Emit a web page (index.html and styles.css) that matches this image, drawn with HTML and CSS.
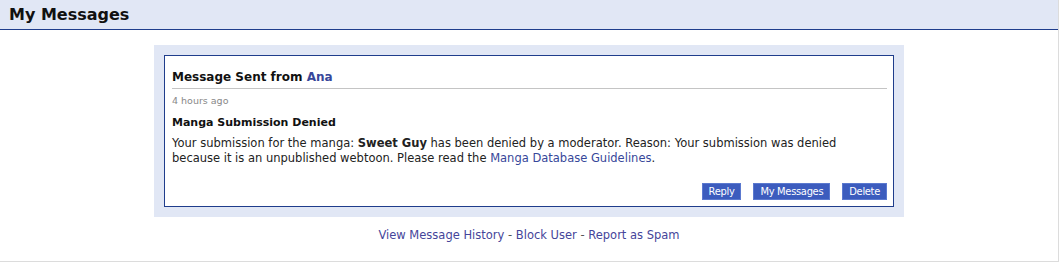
FILE: index.html
```html
<!DOCTYPE html>
<html lang="en">
<head>
    <meta charset="UTF-8">
    <title>My Messages</title>
    <link rel="stylesheet" href="styles.css">
</head>
<body>
    <div class="page">
        <!-- Page header -->
        <div class="header">
            <h1>My Messages</h1>
        </div>

        <div class="content">
            <div class="msg-wrap">
                <div class="msg">
                    <div class="msg-title">Message Sent from <a href="#">Ana</a></div>
                    <div class="msg-time">4 hours ago</div>
                    <div class="msg-subject">Manga Submission Denied</div>
                    <div class="msg-body">
                        Your submission for the manga: <b>Sweet Guy</b> has been denied by a moderator. Reason: Your submission was denied because it is an unpublished webtoon. Please read the <a href="#">Manga Database Guidelines</a>.
                    </div>
                    <div class="msg-actions">
                        <button>Reply</button>
                        <button>My Messages</button>
                        <button>Delete</button>
                    </div>
                </div>
            </div>

            <div class="footer-links">
                <a href="#">View Message History</a> - <a href="#">Block User</a> - <a href="#">Report as Spam</a>
            </div>
        </div>
    </div>
</body>
</html>
```

FILE: styles.css
```css
* {
    font-family: 'DejaVu Sans', Verdana, sans-serif;
}

body {
    margin: 0;
    background: white;
    color: #222;
}

a {
    color: #37479a;
    text-decoration: none;
}

.page {
    width: 1058px;
    height: 261px;
    border-right: 1px solid #dcdcdc;
    border-bottom: 1px solid #dcdcdc;
}

.header {
    height: 29px;
    background: #e1e7f5;
    border-bottom: 1px solid #1f3d8c;
    display: flex;
    align-items: center;
    padding-left: 9px;
}

h1 {
    margin: 0;
    font-size: 16px;
    font-weight: bold;
    color: #111;
}

.content {
    display: flex;
    flex-direction: column;
    align-items: center;
    padding-top: 15px;
}

.msg-wrap {
    width: 730px;
    padding: 10px;
    background: #e1e7f5;
}

.msg {
    background: white;
    border: 1px solid #1f3d8c;
    padding: 13px 6px 6px 7px;
}

.msg-title {
    font-size: 12px;
    font-weight: bold;
    line-height: 16px;
    color: #111;
    padding-bottom: 3px;
    border-bottom: 1px solid #c4c4c4;
}

.msg-time {
    font-size: 9.5px;
    line-height: 14px;
    color: #888;
    margin-top: 5px;
}

.msg-subject {
    font-size: 11px;
    font-weight: bold;
    line-height: 15px;
    color: #111;
    margin-top: 7px;
}

.msg-body {
    font-size: 11.5px;
    line-height: 15px;
    margin-top: 6px;
    padding-right: 30px;
}

.msg-actions {
    display: flex;
    justify-content: flex-end;
    gap: 12px;
    margin-top: 17px;
}

.msg-actions button {
    font-family: 'DejaVu Sans Condensed', Tahoma, sans-serif;
    font-size: 11px;
    letter-spacing: -0.3px;
    color: white;
    background: #3c5cbe;
    border: 1px solid #5b79cf;
    height: 17px;
    padding: 0 6px;
    line-height: 15px;
    cursor: pointer;
}

.footer-links {
    margin-top: 11px;
    font-size: 11.5px;
    line-height: 15px;
    color: #555;
}

.footer-links a {
    color: #45459a;
}
```
